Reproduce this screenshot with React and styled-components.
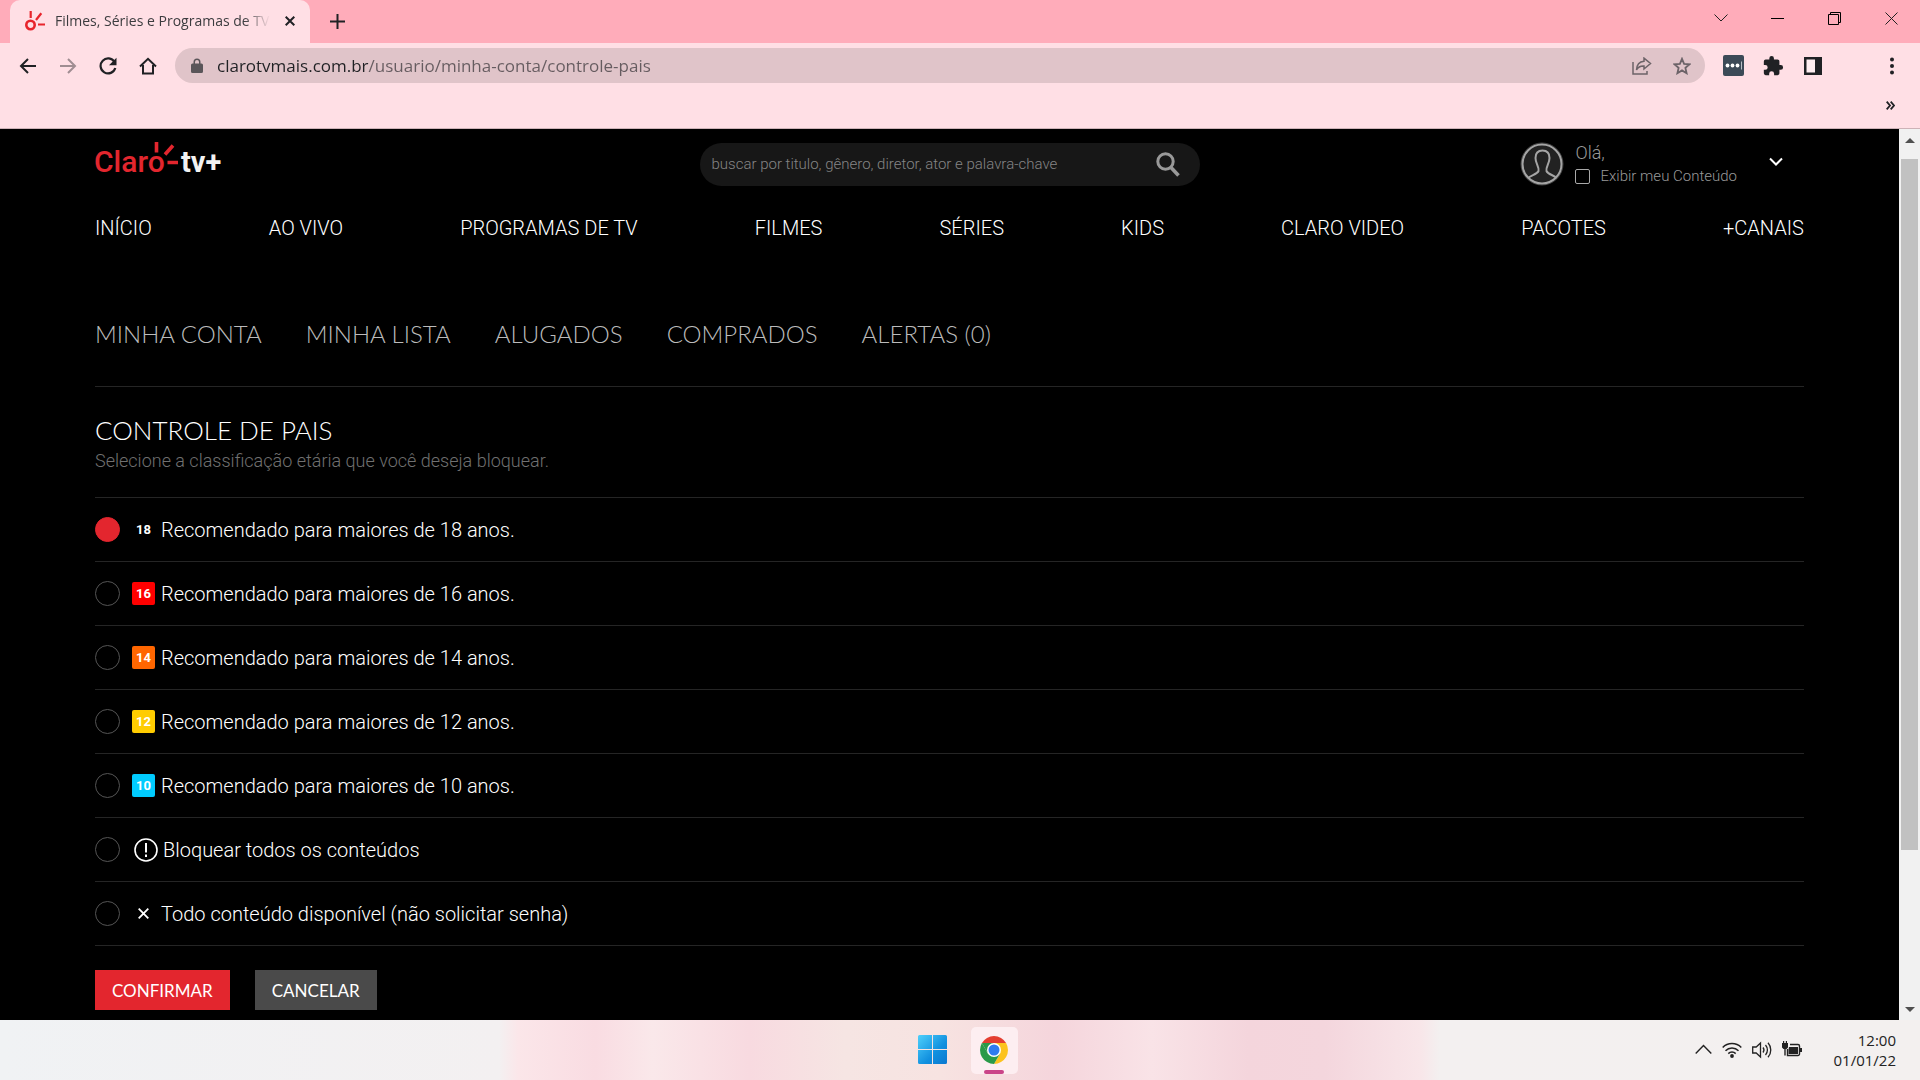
import { useState } from "react";
import styled, { createGlobalStyle } from "styled-components";

const MENU_LIST = [
  "INÍCIO",
  "AO VIVO",
  "PROGRAMAS DE TV",
  "FILMES",
  "SÉRIES",
  "KIDS",
  "CLARO VIDEO",
  "PACOTES",
  "+CANAIS",
];

const ACCOUNT_LIST = [
  "MINHA CONTA",
  "MINHA LISTA",
  "ALUGADOS",
  "COMPRADOS",
  "ALERTAS (0)",
];

const RATING_LIST = [
  { id: "18", color: "#000", label: "Recomendado para maiores de 18 anos." },
  { id: "16", color: "#f00", label: "Recomendado para maiores de 16 anos." },
  { id: "14", color: "#f60", label: "Recomendado para maiores de 14 anos." },
  { id: "12", color: "#fc0", label: "Recomendado para maiores de 12 anos." },
  { id: "10", color: "#0cf", label: "Recomendado para maiores de 10 anos." },
  { id: "all", icon: "alert", label: "Bloquear todos os conteúdos" },
  {
    id: "none",
    icon: "cross",
    label: "Todo conteúdo disponível (não solicitar senha)",
  },
];

const GlobalStyle = createGlobalStyle`
  * {
    box-sizing: border-box;
  }
  body {
    margin: 0;
    background: #000;
    font-family: Roboto, sans-serif;
  }
  button {
    border: none;
    padding: 0;
    background: none;
    cursor: pointer;
  }
  a {
    text-decoration: none;
  }
  svg {
    flex: none;
    display: block;
  }
`;

const Wrapper = styled.div`
  display: flex;
  flex-direction: column;
  min-height: 100vh;
`;

const TabStrip = styled.div`
  display: flex;
  align-items: flex-end;
  height: 43px;
  padding-left: 10px;
  background: #ffacba;
`;

const Tab = styled.div`
  display: flex;
  align-items: center;
  width: 300px;
  height: 43px;
  padding: 0 10px 2px 15px;
  gap: 10px;
  border-radius: 10px 10px 0 0;
  background: #ffdfe5;
`;

const TabTitle = styled.span`
  flex: 1;
  overflow: hidden;
  white-space: nowrap;
  font-family: "Open Sans", "Noto Sans", sans-serif;
  font-size: 14px;
  color: #3c3c3f;
  mask-image: linear-gradient(to right, #000 88%, transparent);
`;

const TabClose = styled.button`
  display: grid;
  place-items: center;
  width: 20px;
  height: 20px;
`;

const NewTab = styled.button`
  display: grid;
  place-items: center;
  width: 35px;
  height: 35px;
  margin: 0 0 4px 10px;
`;

const WindowButtons = styled.div`
  display: flex;
  margin-left: auto;
`;

const WindowButton = styled.button`
  display: grid;
  place-items: center;
  width: 57px;
  height: 36px;
  margin-bottom: 7px;
`;

const Toolbar = styled.div`
  display: flex;
  align-items: center;
  height: 45px;
  padding: 0 12px;
  background: #ffdfe5;
`;

const ToolGroup = styled.div`
  display: flex;
  gap: 8px;
`;

const ToolButton = styled.button`
  display: grid;
  place-items: center;
  width: 32px;
  height: 32px;
`;

const MenuButton = styled(ToolButton)`
  margin-left: 47px;
`;

const Omnibox = styled.div`
  flex: 1;
  display: flex;
  align-items: center;
  gap: 8px;
  height: 35px;
  margin: 0 12px 0 11px;
  padding: 0 7px 0 16px;
  border-radius: 18px;
  background: #e0c4c9;
`;

/* host is darker than the path */
const UrlInput = styled.input`
  flex: 1;
  min-width: 0;
  height: 32px;
  border: none;
  outline: none;
  padding: 0 0 0 6px;
  font-family: "Open Sans", "Noto Sans", sans-serif;
  font-size: 17px;
  background: linear-gradient(to right, #202124 158px, #665c60 158px);
  background-clip: text;
  -webkit-text-fill-color: transparent;
`;

const Bookmarks = styled.div`
  display: flex;
  align-items: center;
  justify-content: flex-end;
  height: 41px;
  padding-right: 20px;
  border-bottom: 1px solid #cdb2b7;
  background: #ffdfe5;
`;

const MoreBookmarks = styled.button`
  display: grid;
  place-items: center;
  width: 20px;
  height: 20px;
  margin-top: -6px;
`;

const Viewport = styled.div`
  flex: 1;
  display: flex;
`;

const Page = styled.main`
  flex: 1;
  min-width: 0;
  padding: 13px 95px 10px;
  background: #000;
  color: #fff;
`;

const Header = styled.header`
  display: grid;
  grid-template-columns: 1fr 500px 1fr;
  align-items: center;
`;

const LogoLink = styled.a`
  align-self: start;
`;

const Search = styled.form`
  display: flex;
  align-items: center;
  height: 43px;
  padding: 0 20px 0 12px;
  border-radius: 22px;
  background: #171717;
`;

const SearchInput = styled.input`
  flex: 1;
  border: none;
  outline: none;
  padding: 0;
  background: none;
  color: #ccc;
  font-family: Roboto, sans-serif;
  font-size: 15px;
  font-weight: 300;
  &::placeholder {
    color: #858585;
  }
`;

const SearchButton = styled.button`
  display: grid;
  place-items: center;
`;

const User = styled.div`
  display: flex;
  align-items: center;
  justify-content: flex-end;
  padding-right: 21px;
`;

const UserInfo = styled.div`
  display: flex;
  flex-direction: column;
  gap: 2px;
  margin: 0 32px 0 11px;
  font-weight: 300;
  color: #999;
`;

const Hello = styled.span`
  font-size: 18px;
  line-height: 22px;
`;

const CheckLabel = styled.label`
  display: flex;
  align-items: center;
  gap: 10px;
  font-size: 15px;
  line-height: 20px;
`;

const Checkbox = styled.input`
  appearance: none;
  width: 15px;
  height: 15px;
  margin: 0;
  border: 1px solid #aaa;
  border-radius: 2px;
  &:checked {
    background: #e3262e;
  }
`;

const UserToggle = styled.button`
  margin-top: -4px;
`;

const MainMenu = styled.nav`
  display: flex;
  justify-content: space-between;
  margin-top: 30px;
`;

const MainLink = styled.a`
  color: #fff;
  font-size: 20px;
  font-weight: 300;
  line-height: 24px;
`;

const AccountMenu = styled.nav`
  display: flex;
  gap: 44px;
  margin-top: 78px;
  padding-bottom: 36px;
  border-bottom: 1px solid #252525;
`;

const AccountLink = styled.a`
  color: #bbb;
  font-family: Lato, sans-serif;
  font-size: 24px;
  font-weight: 300;
  line-height: 32px;
`;

const Form = styled.form`
  padding-top: 26px;
`;

const Title = styled.h1`
  margin: 0;
  font-family: Lato, sans-serif;
  font-size: 26px;
  font-weight: 300;
  line-height: 34px;
`;

const Description = styled.p`
  margin: 2px 0 24px;
  color: #707070;
  font-size: 18px;
  font-weight: 300;
  line-height: 24px;
`;

const RatingList = styled.ul`
  margin: 0;
  padding: 0;
  list-style: none;
  border-top: 1px solid #252525;
`;

const RatingItem = styled.li`
  border-bottom: 1px solid #252525;
`;

const RatingLabel = styled.label`
  display: flex;
  align-items: center;
  height: 63px;
  font-size: 20px;
  font-weight: 300;
  cursor: pointer;
`;

const Radio = styled.input`
  appearance: none;
  width: 25px;
  height: 25px;
  margin: 0 12px 0 0;
  border: 1px solid #555;
  border-radius: 50%;
  cursor: pointer;
  &:checked {
    border-color: #e3262e;
    background: #e3262e;
  }
`;

const Mark = styled.span`
  display: grid;
  place-items: center;
  width: 23px;
  height: 23px;
  margin-right: 6px;
  border-radius: 2px;
  background: ${({ $color }) => $color || "none"};
  font-size: 13px;
  font-weight: 700;
`;

const AlertMark = styled.svg`
  margin: 0 5px 0 2px;
`;

const Actions = styled.div`
  display: flex;
  gap: 25px;
  margin-top: 24px;
`;

const Button = styled.button`
  height: 40px;
  padding: 0 17px;
  background: ${({ $color }) => $color};
  color: #fff;
  font-family: Lato, sans-serif;
  font-size: 17px;
`;

const Scrollbar = styled.div`
  display: flex;
  flex-direction: column;
  align-items: center;
  width: 21px;
  padding: 9px 0 8px;
  background: #f1f1f1;
`;

const Track = styled.div`
  flex: 1;
  width: 17px;
  margin: 16px 0;
`;

const Thumb = styled.div`
  height: 83%;
  background: #c1c1c1;
`;

const TaskbarRow = styled.footer`
  display: grid;
  grid-template-columns: 1fr auto 1fr;
  align-items: center;
  height: 60px;
  padding: 0 24px 0 31px;
  background: linear-gradient(
    to right,
    #f0f2f4,
    #f3f0f1 26%,
    #fbe6e9 27%,
    #f9dce2 31%,
    #fae8ea 34%,
    #f8dae0 39%,
    #f6e5e3 44%,
    #f7e3e1 49%,
    #f5d5dc 55%,
    #f9e3e7 60%,
    #f4d5dc 65%,
    #f4d6dd 69%,
    #f8e6e9 74%,
    #f3f0f0 75%,
    #f3f0ef
  );
`;

const Apps = styled.div`
  display: flex;
  grid-column: 2;
  gap: 14px;
`;

const AppButton = styled.button`
  display: grid;
  place-items: center;
  width: 47px;
  height: 47px;
  border-radius: 5px;
  background: ${({ $active }) => ($active ? "#fdeef1" : "none")};
  position: relative;
  &::after {
    content: "";
    display: ${({ $active }) => ($active ? "block" : "none")};
    position: absolute;
    bottom: 0;
    width: 20px;
    height: 4px;
    border-radius: 2px;
    background: #ca4488;
  }
`;

const Tray = styled.div`
  display: flex;
  align-items: center;
  justify-content: flex-end;
  gap: 10px;
`;

const Clock = styled.div`
  display: flex;
  flex-direction: column;
  margin-left: 22px;
  text-align: right;
  color: #222;
  font-family: "Open Sans", "Noto Sans", sans-serif;
  font-size: 15px;
  line-height: 20px;
`;

function TitleBar() {
  return (
    <TabStrip>
      <Tab>
        <svg width="20" height="20" viewBox="0 0 20 20" fill="none" stroke="#e8242c">
          <circle cx="5.5" cy="14" r="4.2" strokeWidth="2.6" />
          <path d="M5.7 0v7M16.3 2.2 11 9M13 13.5h7" strokeWidth="2.2" />
        </svg>
        <TabTitle>Filmes, Séries e Programas de TV</TabTitle>
        <TabClose aria-label="Fechar guia">
          <svg width="10" height="10" viewBox="0 0 10 10" stroke="#202124" strokeWidth="2">
            <path d="M.7.7l8.6 8.6M9.3.7.7 9.3" />
          </svg>
        </TabClose>
      </Tab>
      <NewTab aria-label="Nova guia">
        <svg width="15" height="15" viewBox="0 0 15 15" stroke="#202124" strokeWidth="2">
          <path d="M7.5 0v15M0 7.5h15" />
        </svg>
      </NewTab>
      <WindowButtons>
        <WindowButton aria-label="Pesquisar guias">
          <svg width="14" height="8" viewBox="0 0 14 8" fill="none" stroke="#222">
            <path d="M.5.5 7 7 13.5.5" />
          </svg>
        </WindowButton>
        <WindowButton aria-label="Minimizar">
          <svg width="13" height="13" viewBox="0 0 13 13" stroke="#000">
            <path d="M0 6.5h13" />
          </svg>
        </WindowButton>
        <WindowButton aria-label="Restaurar">
          <svg width="13" height="13" viewBox="0 0 13 13" fill="none" stroke="#000">
            <path d="M.5 2.5h10v10H.5zM2.5 2.5v-2h10v10h-2" />
          </svg>
        </WindowButton>
        <WindowButton aria-label="Fechar">
          <svg width="13" height="13" viewBox="0 0 13 13" stroke="#222">
            <path d="M.5.5l12 12M12.5.5l-12 12" />
          </svg>
        </WindowButton>
      </WindowButtons>
    </TabStrip>
  );
}

function AddressBar() {
  const [url, setUrl] = useState(
    "clarotvmais.com.br/usuario/minha-conta/controle-pais"
  );

  return (
    <Toolbar>
      <ToolGroup>
        <ToolButton aria-label="Voltar">
          <svg width="18" height="18" viewBox="0 0 18 18" fill="none" stroke="#202124" strokeWidth="2">
            <path d="M17 9H2M9 2 2 9l7 7" />
          </svg>
        </ToolButton>
        <ToolButton aria-label="Avançar">
          <svg width="18" height="18" viewBox="0 0 18 18" fill="none" stroke="#a08d92" strokeWidth="2">
            <path d="M1 9h15M9 2l7 7-7 7" />
          </svg>
        </ToolButton>
        <ToolButton aria-label="Recarregar">
          <svg width="18" height="18" viewBox="0 0 18 18" fill="none" stroke="#202124" strokeWidth="2.2">
            <path d="M15.5 5A7.5 7.5 0 1 0 16.3 11" />
            <path d="M17.5.8v7.4H10z" fill="#202124" stroke="none" />
          </svg>
        </ToolButton>
        <ToolButton aria-label="Página inicial">
          <svg width="18" height="18" viewBox="0 0 18 18" fill="none" stroke="#202124" strokeWidth="2">
            <path d="M1 9.5 9 1.8l8 7.7M4 8v8.5h10V8" />
          </svg>
        </ToolButton>
      </ToolGroup>
      <Omnibox>
        <svg width="12" height="15" viewBox="0 0 12 15" fill="#5a5559">
          <path
            fillRule="evenodd"
            d="M1.5 5.5h1V4a3.5 3.5 0 0 1 7 0v1.5h1A1.5 1.5 0 0 1 12 7v6.500A1.5 1.5 0 0 1 10.5 15h-9A1.5 1.5 0 0 1 0 13.5V7a1.5 1.5 0 0 1 1.5-1.5zM4 5.500h4V4a2 2 0 0 0-4 0z"
          />
        </svg>
        <UrlInput
          aria-label="Endereço"
          value={url}
          onChange={(e) => setUrl(e.target.value)}
        />
        <ToolButton aria-label="Compartilhar">
          <svg width="20" height="18" viewBox="0 0 20 18" fill="none" stroke="#6c6368" strokeWidth="1.5">
            <path d="M1 5v12h14v-3" />
            <path d="M12 1.200 18.500 6.500 12 12V9C8.500 8.800 6 10 4.500 13 4.700 8 7.500 4.600 12 4.200z" />
          </svg>
        </ToolButton>
        <ToolButton aria-label="Favoritar">
          <svg width="18" height="18" viewBox="0 0 18 18" fill="none" stroke="#6c6368" strokeWidth="1.8">
            <path d="M9 1.800l2.100 5 5.400.5-4.100 3.600 1.200 5.300L9 13.400l-4.600 2.800 1.200-5.300L1.500 7.300l5.400-.5z" />
          </svg>
        </ToolButton>
      </Omnibox>
      <ToolGroup>
        <ToolButton aria-label="Gerenciador de senhas">
          <svg width="21" height="21" viewBox="0 0 21 21">
            <rect width="21" height="21" rx="2" fill="#3c4a57" />
            <circle cx="4.5" cy="10.5" r="1.9" fill="#fff" />
            <circle cx="9.5" cy="10.5" r="1.9" fill="#fff" />
            <circle cx="14.5" cy="10.5" r="1.9" fill="#fff" />
            <path d="M18.5 6.5v8" stroke="#b8bfc5" />
          </svg>
        </ToolButton>
        <ToolButton aria-label="Extensões">
          <svg width="22" height="22" viewBox="0 0 24 24" fill="#202124">
            <path d="M20.5 11H19V7a2 2 0 0 0-2-2h-4V3.500a2.500 2.500 0 0 0-5 0V5H4a2 2 0 0 0-2 2v3.800h1.500a2.700 2.700 0 0 1 0 5.400H2V20a2 2 0 0 0 2 2h3.800v-1.500a2.700 2.700 0 0 1 5.400 0V22H17a2 2 0 0 0 2-2v-4h1.500a2.500 2.500 0 0 0 0-5z" />
          </svg>
        </ToolButton>
        <ToolButton aria-label="Painel lateral">
          <svg width="18" height="18" viewBox="0 0 18 18">
            <path d="M0 0h18v18H0z" fill="#202124" />
            <path d="M2.5 2.5H11v13H2.5z" fill="#ffeef1" />
          </svg>
        </ToolButton>
      </ToolGroup>
      <MenuButton aria-label="Menu do navegador">
        <svg width="4" height="18" viewBox="0 0 4 18" fill="#202124">
          <circle cx="2" cy="2.5" r="2" />
          <circle cx="2" cy="9" r="2" />
          <circle cx="2" cy="15.5" r="2" />
        </svg>
      </MenuButton>
    </Toolbar>
  );
}

function Logo() {
  return (
    <LogoLink href="#" aria-label="Claro tv+">
      <svg width="130" height="36" viewBox="0 0 130 36">
        <text x="-1" y="30" fontFamily="Roboto, sans-serif" fontWeight="500" fontSize="30" fill="#e3262e">
          Claro
        </text>
        <text x="86" y="30" fontFamily="Roboto, sans-serif" fontWeight="700" fontSize="29" fill="#f2f2f2">
          tv+
        </text>
        <path d="M61.5 0v10.5M78 3.500 70 12.500M72.500 20.500h10.500" stroke="#e3262e" strokeWidth="3.6" />
      </svg>
    </LogoLink>
  );
}

function SiteHeader() {
  return (
    <Header>
      <Logo />
      <Search onSubmit={(e) => e.preventDefault()}>
        <SearchInput
          type="search"
          aria-label="Buscar"
          placeholder="buscar por titulo, gênero, diretor, ator e palavra-chave"
        />
        <SearchButton aria-label="Buscar">
          <svg width="24" height="25" viewBox="0 0 24 25" fill="none" stroke="#999">
            <circle cx="9.5" cy="9.5" r="7.7" strokeWidth="3" />
            <path d="M15 15.5l7.5 8" strokeWidth="3.6" />
          </svg>
        </SearchButton>
      </Search>
      <User>
        <svg width="44" height="44" viewBox="0 0 44 44" fill="none">
          <circle cx="22" cy="22" r="21" fill="#222" stroke="#444" />
          <circle cx="22" cy="22" r="19.5" stroke="#a5a5a5" strokeWidth="2" />
          <path
            d="M8 36c3-3 9-3.500 10.500-7 1-4-3-7-3-13 0-5.500 3-7.500 7-7.500s7 2.500 7 7.500c0 6-4 9-3 13 1.500 3.500 7.500 4 10 7"
            stroke="#a5a5a5"
            strokeWidth="2"
          />
        </svg>
        <UserInfo>
          <Hello>Olá,</Hello>
          <CheckLabel>
            <Checkbox type="checkbox" />
            Exibir meu Conteúdo
          </CheckLabel>
        </UserInfo>
        <UserToggle aria-label="Abrir menu do usuário">
          <svg width="14" height="10" viewBox="0 0 14 10" fill="none" stroke="#fff" strokeWidth="2">
            <path d="M1 1.5l6 6 6-6" />
          </svg>
        </UserToggle>
      </User>
    </Header>
  );
}

function RatingMark({ item }) {
  if (item.icon === "alert") {
    return (
      <AlertMark width="24" height="24" viewBox="0 0 24 24" fill="none" stroke="#fff">
        <circle cx="12" cy="12" r="11" strokeWidth="1.6" />
        <path d="M12 5v9.500M12 16.500V19" strokeWidth="2" />
      </AlertMark>
    );
  }
  if (item.icon === "cross") {
    return (
      <Mark>
        <svg width="11" height="11" viewBox="0 0 11 11" stroke="#fff" strokeWidth="1.8">
          <path d="M.7.7l9.6 9.6M10.3.7.7 10.3" />
        </svg>
      </Mark>
    );
  }
  return <Mark $color={item.color}>{item.id}</Mark>;
}

function ParentalControl() {
  const [selected, setSelected] = useState("18");

  return (
    <Form onSubmit={(e) => e.preventDefault()}>
      <Title>CONTROLE DE PAIS</Title>
      <Description>
        Selecione a classificação etária que você deseja bloquear.
      </Description>
      <RatingList>
        {RATING_LIST.map((el) => (
          <RatingItem key={el.id}>
            <RatingLabel>
              <Radio
                type="radio"
                name="rating"
                checked={selected === el.id}
                onChange={() => setSelected(el.id)}
              />
              <RatingMark item={el} />
              {el.label}
            </RatingLabel>
          </RatingItem>
        ))}
      </RatingList>
      <Actions>
        <Button $color="#e3262e">CONFIRMAR</Button>
        <Button type="button" $color="#4a4a4a" onClick={() => setSelected("18")}>
          CANCELAR
        </Button>
      </Actions>
    </Form>
  );
}

function Taskbar() {
  return (
    <TaskbarRow>
      <Apps>
        <AppButton aria-label="Iniciar">
          <svg width="30" height="30" viewBox="0 0 30 30">
            <defs>
              <linearGradient id="win" x1="0" y1="0" x2="1" y2="1">
                <stop offset="0" stopColor="#4fd0fb" />
                <stop offset="0.6" stopColor="#1190df" />
                <stop offset="1" stopColor="#0a78d0" />
              </linearGradient>
            </defs>
            <path
              d="M1.500 0H14v14H0V1.500A1.500 1.500 0 0 1 1.500 0zM15 0h12.500A1.500 1.500 0 0 1 29 1.500V14H15zM0 15h14v14H1.500A1.500 1.500 0 0 1 0 27.500zM15 15h14v12.500a1.500 1.500 0 0 1-1.500 1.500H15z"
              fill="url(#win)"
            />
          </svg>
        </AppButton>
        <AppButton $active aria-label="Google Chrome">
          <svg width="28" height="28" viewBox="0 0 28 28">
            <path d="M14 14 1.900 7A14 14 0 0 1 26.100 7z" fill="#e43e30" />
            <path d="M14 14V7h12.100A14 14 0 0 1 14 28l6.100-10.500z" fill="#fcc31e" />
            <path d="M14 14l6.100 3.500L14 28A14 14 0 0 1 1.900 7l6 10.500z" fill="#2a9a49" />
            <path d="M1.900 7 7.900 17.500 14 7z" fill="#2a9a49" />
            <circle cx="14" cy="14" r="7" fill="#fff" />
            <circle cx="14" cy="14" r="5.5" fill="#2f7cf0" />
          </svg>
        </AppButton>
      </Apps>
      <Tray>
        <svg width="17" height="20" viewBox="0 0 17 20" fill="none" stroke="#222" strokeWidth="1.4">
          <path d="M.7 13.5l7.8-8 7.8 8" />
        </svg>
        <svg width="20" height="20" viewBox="0 0 20 20" fill="none" stroke="#222" strokeWidth="1.5">
          <path d="M.7 7.500a13 13 0 0 1 18.600 0M3.500 10.700a9 9 0 0 1 13 0M6.300 13.600a5.200 5.200 0 0 1 7.400 0" />
          <circle cx="10" cy="16" r="1.9" fill="#222" stroke="none" />
        </svg>
        <svg width="20" height="20" viewBox="0 0 20 20" fill="none" stroke="#222" strokeWidth="1.3">
          <path d="M.7 7h3.500L8.500 3v14l-4.300-4H.7z" />
          <path d="M11 7.500a4 4 0 0 1 0 5M13.500 5a7.500 7.500 0 0 1 0 10M16 2.700a11 11 0 0 1 0 14.600" />
        </svg>
        <svg width="20" height="20" viewBox="0 0 20 20" fill="none" stroke="#222" strokeWidth="1.4">
          <path d="M8 4.500h8a1.500 1.500 0 0 1 1.500 1.500v8a1.500 1.500 0 0 1-1.500 1.500H5.500V9" />
          <path
            d="M7 7h9v7H6.500V9.500zM18 8h2v4h-2zM0 3h6v4.500L4.500 9h-3L0 7.500zM1 1h1.200v2H1zM3.800 1H5v2H3.800z"
            fill="#222"
            stroke="none"
          />
          <path d="M3 8v7.500" />
        </svg>
        <Clock>
          <time>12:00</time>
          <time>01/01/22</time>
        </Clock>
      </Tray>
    </TaskbarRow>
  );
}

function App() {
  return (
    <Wrapper>
      <GlobalStyle />
      <TitleBar />
      <AddressBar />
      <Bookmarks>
        <MoreBookmarks aria-label="Mais favoritos">
          <svg width="9" height="9" viewBox="0 0 9 9" fill="none" stroke="#202124" strokeWidth="1.8">
            <path d="M.7.7 4 4.500.7 8.300M4.700.7 8 4.500 4.700 8.300" />
          </svg>
        </MoreBookmarks>
      </Bookmarks>
      <Viewport>
        <Page>
          <SiteHeader />
          <MainMenu>
            {MENU_LIST.map((el) => (
              <MainLink key={el} href="#">
                {el}
              </MainLink>
            ))}
          </MainMenu>
          <AccountMenu>
            {ACCOUNT_LIST.map((el) => (
              <AccountLink key={el} href="#">
                {el}
              </AccountLink>
            ))}
          </AccountMenu>
          <ParentalControl />
        </Page>
        <Scrollbar>
          <svg width="10" height="5" viewBox="0 0 10 5" fill="#505050">
            <path d="M0 5 5 0l5 5z" />
          </svg>
          <Track>
            <Thumb />
          </Track>
          <svg width="10" height="5" viewBox="0 0 10 5" fill="#505050">
            <path d="M0 0l5 5 5-5z" />
          </svg>
        </Scrollbar>
      </Viewport>
      <Taskbar />
    </Wrapper>
  );
}
export default App;
